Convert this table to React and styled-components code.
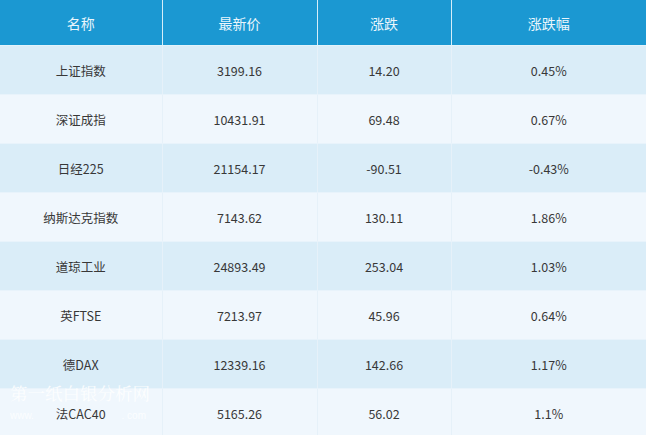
import React from "react";
import styled, { createGlobalStyle } from "styled-components";

const Global = createGlobalStyle`
  html, body { margin: 0; padding: 0; background: #f0f7fd; }
  body { font-family: "Microsoft YaHei", "Noto Sans CJK SC", "Noto Sans", sans-serif; overflow: hidden; }
`;

const Wrap = styled.div`
  position: relative;
  width: 646px;
  height: 435px;
  overflow: hidden;
`;

const Table = styled.table`
  width: 646px;
  border-collapse: collapse;
  table-layout: fixed;
`;

const Th = styled.th`
  height: 45px;
  padding: 0;
  background: #1b98d2;
  color: #eaf6fc;
  font-weight: normal;
  font-size: 14px;
  text-align: center;
  border-left: 1px solid #d6eef9;
  border-bottom: 1px solid #e2f3fb;
  &:first-child { border-left: none; }
`;

const Tr = styled.tr`
  background: ${(p) => (p.$alt ? "#f0f7fd" : "#daedf8")};
`;

const Td = styled.td`
  height: 48px;
  padding: 0;
  text-align: center;
  font-size: 12.5px;
  color: #383838;
  border-left: 1px solid #e6f1f9;
  border-bottom: 1px solid #e8f3fb;
  &:first-child { border-left: none; }
`;

const Watermark = styled.div`
  position: absolute;
  left: 10px;
  top: 382px;
  width: 142px;
  color: rgba(255, 255, 255, 0.88);
  pointer-events: none;
`;

const WmTitle = styled.div`
  font-family: "Noto Serif CJK SC", "Noto Sans CJK SC", serif;
  font-size: 17.5px;
  line-height: 22px;
  white-space: nowrap;
`;

const WmUrl = styled.div`
  display: flex;
  justify-content: space-between;
  width: 136px;
  font-family: "Liberation Sans", sans-serif;
  font-size: 10px;
  line-height: 14px;
  margin-top: 5px;
  color: rgba(255, 255, 255, 0.8);
`;

const cols = [162, 155, 134, 195];
const headers = ["名称", "最新价", "涨跌", "涨跌幅"];
const rows = [
  ["上证指数", "3199.16", "14.20", "0.45%"],
  ["深证成指", "10431.91", "69.48", "0.67%"],
  ["日经225", "21154.17", "-90.51", "-0.43%"],
  ["纳斯达克指数", "7143.62", "130.11", "1.86%"],
  ["道琼工业", "24893.49", "253.04", "1.03%"],
  ["英FTSE", "7213.97", "45.96", "0.64%"],
  ["德DAX", "12339.16", "142.66", "1.17%"],
  ["法CAC40", "5165.26", "56.02", "1.1%"],
];

export default function App() {
  return (
    <Wrap>
      <Global />
      <Table>
        <colgroup>
          {cols.map((w, i) => (
            <col key={i} style={{ width: w }} />
          ))}
        </colgroup>
        <thead>
          <tr>
            {headers.map((h) => (
              <Th key={h}>{h}</Th>
            ))}
          </tr>
        </thead>
        <tbody>
          {rows.map((r, i) => (
            <Tr key={i} $alt={i % 2 === 1}>
              {r.map((c, j) => (
                <Td key={j}>{c}</Td>
              ))}
            </Tr>
          ))}
        </tbody>
      </Table>
      <Watermark>
        <WmTitle>第一纸白银分析网</WmTitle>
        <WmUrl>
          <span>www.</span>
          <span>. com</span>
        </WmUrl>
      </Watermark>
    </Wrap>
  );
}
